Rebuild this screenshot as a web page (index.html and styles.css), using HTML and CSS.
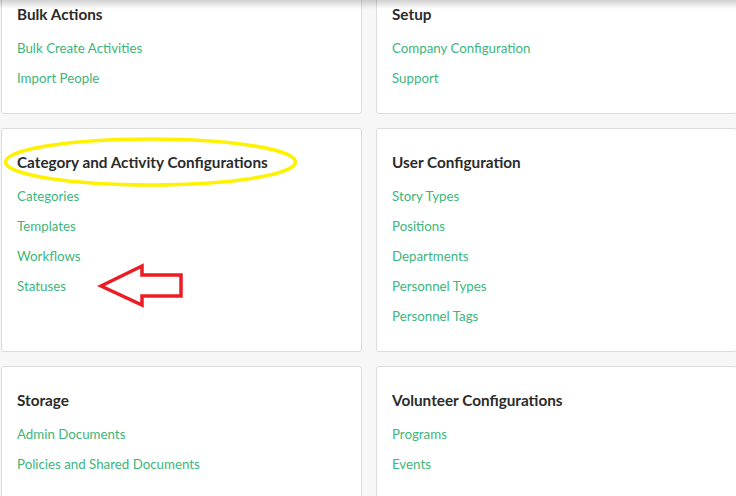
FILE: index.html
```html
<!DOCTYPE html>
<html>
<head>
<meta charset="utf-8">
<link rel="stylesheet" href="styles.css">
</head>
<body>
<div class="page">
  <div class="grid">
    <section class="card">
      <h3 class="card-title">Bulk Actions</h3>
      <div class="links">
        <a class="link">Bulk Create Activities</a>
        <a class="link">Import People</a>
      </div>
    </section>
    <section class="card">
      <h3 class="card-title">Setup</h3>
      <div class="links">
        <a class="link">Company Configuration</a>
        <a class="link">Support</a>
      </div>
    </section>
    <section class="card">
      <h3 class="card-title">Category and Activity Configurations</h3>
      <div class="links">
        <a class="link">Categories</a>
        <a class="link">Templates</a>
        <a class="link">Workflows</a>
        <a class="link">Statuses</a>
      </div>
    </section>
    <section class="card">
      <h3 class="card-title">User Configuration</h3>
      <div class="links">
        <a class="link">Story Types</a>
        <a class="link">Positions</a>
        <a class="link">Departments</a>
        <a class="link">Personnel Types</a>
        <a class="link">Personnel Tags</a>
      </div>
    </section>
    <section class="card">
      <h3 class="card-title">Storage</h3>
      <div class="links">
        <a class="link">Admin Documents</a>
        <a class="link">Policies and Shared Documents</a>
      </div>
    </section>
    <section class="card">
      <h3 class="card-title">Volunteer Configurations</h3>
      <div class="links">
        <a class="link">Programs</a>
        <a class="link">Events</a>
      </div>
    </section>
  </div>
  <div class="top-shadow"></div>
  <svg class="annotations" width="736" height="496" viewBox="0 0 736 496">
    <ellipse cx="150.5" cy="162" rx="145" ry="23" fill="none" stroke="#fff200" stroke-width="3.5"/>
    <path d="M101 286 L142 266 L142 275 L181 275 L181 296 L142 296 L142 305 Z" fill="none" stroke="#ed1c24" stroke-width="3.5" stroke-linejoin="miter"/>
  </svg>
</div>
</body>
</html>
```

FILE: styles.css
```css
html, body {
  margin: 0;
  padding: 0;
  background: #f7f7f7;
  overflow: hidden;
}
body {
  font-family: Lato, "Liberation Sans", sans-serif;
  width: 736px;
  height: 496px;
}
.page {
  position: relative;
  width: 736px;
  height: 496px;
  overflow: hidden;
}
.grid {
  display: grid;
  grid-template-columns: 361px 361px;
  column-gap: 14px;
  row-gap: 14px;
  margin-top: -20px;
  padding-left: 1px;
}
.card {
  background: #fff;
  border: 1px solid #dcdcdc;
  border-radius: 3px;
  padding: 23px 15px 25px;
}
.card-title {
  margin: 0 0 14px;
  font-size: 15.3px;
  font-weight: 700;
  line-height: 20px;
  color: #2b2b2b;
}
.links {
  display: flex;
  flex-direction: column;
  gap: 10px;
}
.link {
  font-size: 13.3px;
  line-height: 20px;
  color: #3db57b;
  text-decoration: none;
}
.top-shadow {
  position: absolute;
  left: 0;
  top: 0;
  width: 736px;
  height: 9px;
  background: linear-gradient(to bottom, rgba(0,0,0,0.18), rgba(0,0,0,0));
}
.annotations {
  position: absolute;
  left: 0;
  top: 0;
  pointer-events: none;
}
```
